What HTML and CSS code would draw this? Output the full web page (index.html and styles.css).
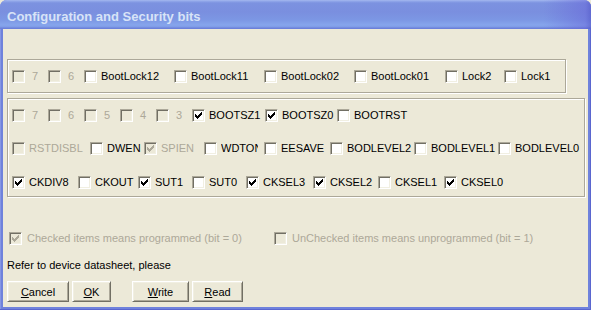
FILE: index.html
```html
<!DOCTYPE html>
<html>
<head>
<meta charset="utf-8">
<link rel="stylesheet" href="styles.css">
</head>
<body>
<div class="window">
  <div class="titlebar"><span class="title">Configuration and Security bits</span></div>
  <div class="client">
    <div class="group g1">
      <div class="row r1">
        <label class="it dis num"><span class="cb"></span><span class="tx">7</span></label>
        <label class="it dis num"><span class="cb"></span><span class="tx">6</span></label>
        <label class="it"><span class="cb"></span><span class="tx">BootLock12</span></label>
        <label class="it"><span class="cb"></span><span class="tx">BootLock11</span></label>
        <label class="it"><span class="cb"></span><span class="tx">BootLock02</span></label>
        <label class="it"><span class="cb"></span><span class="tx">BootLock01</span></label>
        <label class="it"><span class="cb"></span><span class="tx">Lock2</span></label>
        <label class="it"><span class="cb"></span><span class="tx">Lock1</span></label>
      </div>
    </div>
    <div class="group g2">
      <div class="row r2">
        <label class="it dis num"><span class="cb"></span><span class="tx">7</span></label>
        <label class="it dis num"><span class="cb"></span><span class="tx">6</span></label>
        <label class="it dis num"><span class="cb"></span><span class="tx">5</span></label>
        <label class="it dis num"><span class="cb"></span><span class="tx">4</span></label>
        <label class="it dis num"><span class="cb"></span><span class="tx">3</span></label>
        <label class="it"><span class="cb on"></span><span class="tx">BOOTSZ1</span></label>
        <label class="it"><span class="cb on"></span><span class="tx">BOOTSZ0</span></label>
        <label class="it"><span class="cb"></span><span class="tx">BOOTRST</span></label>
      </div>
      <div class="row r3">
        <label class="it dis"><span class="cb"></span><span class="tx">RSTDISBL</span></label>
        <label class="it"><span class="cb"></span><span class="tx">DWEN</span></label>
        <label class="it dis"><span class="cb on"></span><span class="tx">SPIEN</span></label>
        <label class="it"><span class="cb"></span><span class="tx clip">WDTON</span></label>
        <label class="it"><span class="cb"></span><span class="tx">EESAVE</span></label>
        <label class="it"><span class="cb"></span><span class="tx">BODLEVEL2</span></label>
        <label class="it"><span class="cb"></span><span class="tx">BODLEVEL1</span></label>
        <label class="it"><span class="cb"></span><span class="tx">BODLEVEL0</span></label>
      </div>
      <div class="row r4">
        <label class="it"><span class="cb on"></span><span class="tx">CKDIV8</span></label>
        <label class="it"><span class="cb"></span><span class="tx">CKOUT</span></label>
        <label class="it"><span class="cb on"></span><span class="tx">SUT1</span></label>
        <label class="it"><span class="cb"></span><span class="tx">SUT0</span></label>
        <label class="it"><span class="cb on"></span><span class="tx">CKSEL3</span></label>
        <label class="it"><span class="cb on"></span><span class="tx">CKSEL2</span></label>
        <label class="it"><span class="cb"></span><span class="tx">CKSEL1</span></label>
        <label class="it"><span class="cb on"></span><span class="tx">CKSEL0</span></label>
      </div>
    </div>
    <div class="row notes">
      <label class="it dis"><span class="cb on"></span><span class="tx">Checked items means programmed (bit = 0)</span></label>
      <label class="it dis"><span class="cb"></span><span class="tx">UnChecked items means unprogrammed (bit = 1)</span></label>
    </div>
    <p class="refer">Refer to device datasheet, please</p>
    <div class="buttons">
      <button class="btn b-cancel"><u>C</u>ancel</button>
      <button class="btn b-ok"><u>O</u>K</button>
      <button class="btn b-write"><u>W</u>rite</button>
      <button class="btn b-read"><u>R</u>ead</button>
    </div>
  </div>
</div>
</body>
</html>
```
FILE: styles.css
```css
html, body {
  margin: 0;
  padding: 0;
  background: #ece9d8;
}
.window {
  width: 591px;
  height: 310px;
  box-sizing: border-box;
  display: flex;
  flex-direction: column;
  background: #6f82dc;
  border-radius: 7px 7px 0 0;
  overflow: hidden;
  font-family: "Liberation Sans", Arial, sans-serif;
  font-size: 11px;
  color: #000;
  box-shadow: inset -1px -1px #5a66cf, inset 1px 0 #8596e4;
}
.titlebar {
  height: 29px;
  flex: none;
  box-sizing: border-box;
  padding: 9px 0 0 7px;
  background:
    linear-gradient(to right, rgba(0,0,0,0) 0, rgba(0,0,0,0) 92%, rgba(100,95,215,0.45) 99%, rgba(80,80,200,0.6) 100%),
    linear-gradient(to bottom, #a6b9ef 0, #93a9ea 1px, #7c92e0 3px, #7a8fdf 12px, #7c97e4 20px, #86a5ec 25px, #7f9be6 27px, #6b80da 28px, #6b80da 29px);
}
.title {
  display: block;
  font-weight: bold;
  font-size: 13px;
  line-height: 15px;
  color: #d8e3f7;
  white-space: nowrap;
}
.client {
  flex: none;
  width: 585px;
  height: 278px;
  margin-left: 3px;
  box-sizing: border-box;
  background: #ece9d8;
  padding: 30px 0 0 4px;
}
.group {
  box-sizing: border-box;
  border: 1px solid #aca899;
  box-shadow: inset 1px 1px #fff, 1px 1px #fff;
  padding: 10px 0 0 4px;
}
.g1 {
  width: 559px;
  height: 34px;
}
.g2 {
  width: 578px;
  height: 99px;
  margin-top: 5px;
  display: flex;
  flex-direction: column;
  gap: 20px;
}
.g2 .r4 {
  margin-top: 1px;
}
.row {
  display: grid;
  height: 13px;
  align-items: center;
}
.r1 { grid-template-columns: 36px 36px 90px 90px 90px 91px 59px 1fr; }
.r2 { grid-template-columns: 36px 36px 36px 36px 36px 73px 72px 1fr; }
.r3 { grid-template-columns: 78px 54px 60px 60px 66px 84px 84px 1fr; }
.r4 { grid-template-columns: 66px 60px 54px 54px 67px 65px 66px 1fr; }
.notes {
  grid-template-columns: 265px 1fr;
  margin: 35px 0 0 2px;
}
.it {
  display: flex;
  align-items: center;
  height: 13px;
  white-space: nowrap;
}
.tx {
  margin-left: 4px;
  line-height: 13px;
}
.num .tx {
  margin-left: 7px;
}
.notes .tx {
  margin-left: 5px;
}
.clip {
  display: block;
  width: 37px;
  overflow: hidden;
}
.cb {
  flex: none;
  position: relative;
  width: 13px;
  height: 13px;
  box-sizing: border-box;
  border: 1px solid;
  border-color: #aca899 #fff #fff #aca899;
  box-shadow: inset 1px 1px #716f64, inset -1px -1px #f1efe2;
  background: #fff;
  color: #000;
}
.dis .tx {
  color: #aca899;
}
.dis .cb {
  background: #ece9d8;
  color: #aca899;
}
.cb.on::after {
  content: "";
  position: absolute;
  left: 2px;
  top: 2px;
  width: 1px;
  height: 1px;
  box-shadow:
    6px 0, 5px 1px, 6px 1px,
    0 2px, 4px 2px, 5px 2px, 6px 2px,
    0 3px, 1px 3px, 3px 3px, 4px 3px, 5px 3px,
    0 4px, 1px 4px, 2px 4px, 3px 4px, 4px 4px,
    1px 5px, 2px 5px, 3px 5px,
    2px 6px;
}
.refer {
  margin: 14px 0 0 0;
  line-height: 13px;
}
.buttons {
  display: flex;
  margin-top: 9px;
}
.btn {
  height: 21px;
  box-sizing: border-box;
  padding: 0;
  margin: 0;
  font-family: "Liberation Sans", Arial, sans-serif;
  font-size: 11px;
  color: #000;
  background: #ece9d8;
  border: 1px solid;
  border-color: #fff #716f64 #716f64 #fff;
  box-shadow: inset 1px 1px #f1efe2, inset -1px -1px #aca899;
  border-radius: 0;
  text-align: center;
}
.b-cancel { width: 62px; }
.b-ok { width: 39px; margin-left: 3px; }
.b-write { width: 57px; margin-left: 21px; }
.b-read { width: 51px; margin-left: 3px; }
```
